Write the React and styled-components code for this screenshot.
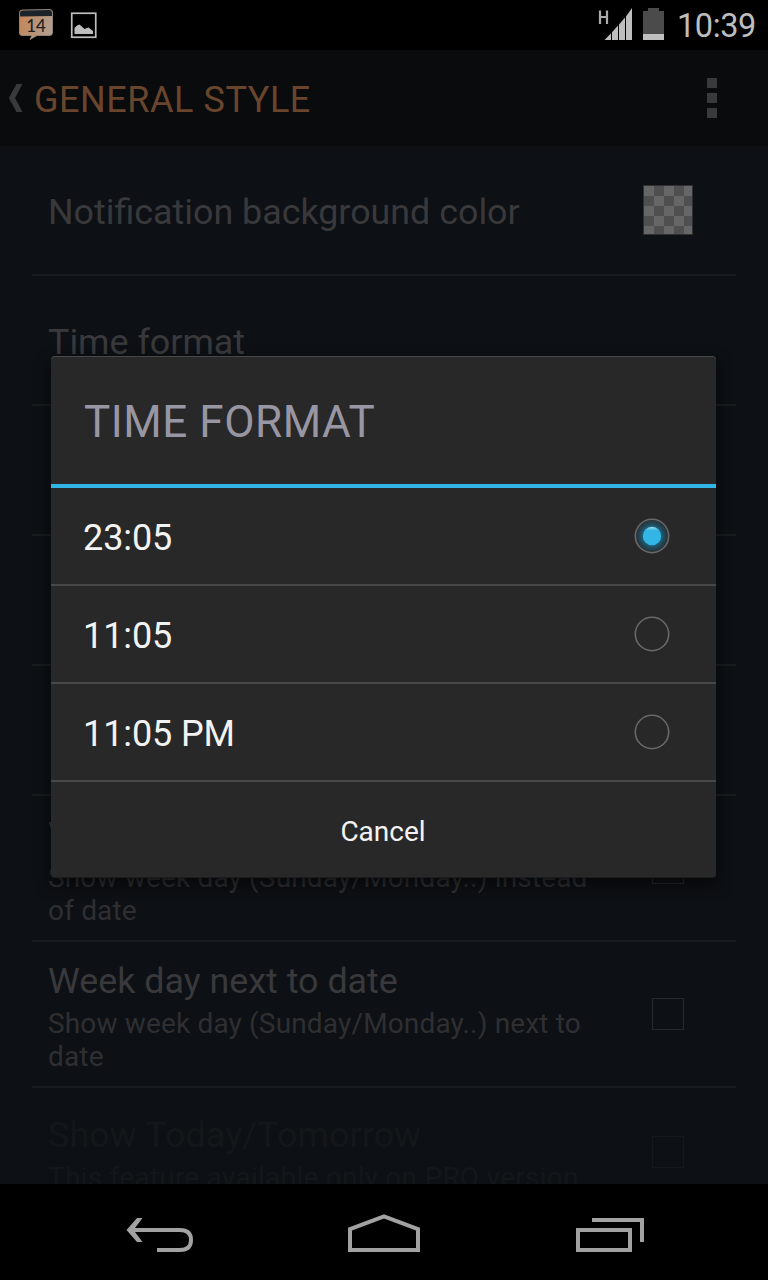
import React, { useState } from 'react';
import styled, { createGlobalStyle } from 'styled-components';

const GlobalStyle = createGlobalStyle`
  * {
    box-sizing: border-box;
  }

  body {
    margin: 0;
    background: #000;
    font-family: Roboto, "Noto Sans", sans-serif;
  }
`;

const Screen = styled.div`
  position: relative;
  display: flex;
  flex-direction: column;
  width: 768px;
  height: 1280px;
  overflow: hidden;
  background: #0d1014;
`;

const StatusBar = styled.header`
  display: flex;
  align-items: center;
  flex: 0 0 50px;
  height: 50px;
  background: #000;
`;

const NotificationIcons = styled.div`
  display: flex;
  flex: 1;
`;

const Clock = styled.div`
  width: 91px;
  padding-top: 3px;
  color: #bebebe;
  font-size: 32.5px;
  line-height: 47px;
  letter-spacing: -0.4px;
  white-space: nowrap;
`;

const ActionBar = styled.div`
  display: flex;
  align-items: center;
  flex: 0 0 96px;
  background: #0a0b0c;
`;

const ActionTitle = styled.h1`
  flex: 1;
  margin: 0;
  padding: 4px 0 0 10px;
  color: #69452d;
  font-size: 36px;
  font-weight: 400;
  line-height: 42px;
  letter-spacing: ${(props) => props.$spacing};
`;

const Overflow = styled.button`
  display: flex;
  flex-direction: column;
  align-items: center;
  gap: 5px;
  width: 112px;
  padding: 0;
  border: none;
  background: none;
`;

const OverflowDot = styled.span`
  width: 10px;
  height: 10px;
  background: #3a3a3a;
`;

const SettingsList = styled.div`
  flex: 1;
  min-height: 0;
  padding: 0 32px;
  overflow: hidden;
`;

const SettingRow = styled.div`
  display: flex;
  align-items: center;
  min-height: 130px;
  padding: 0 16px;
  border-bottom: 2px solid #191c1e;
`;

const SettingText = styled.div`
  flex: 1;
  padding: ${(props) => (props.$single ? '22px 0 18px' : props.$disabled ? '18px 0 15px' : '18px 0 13px')};
  color: ${(props) => (props.$disabled ? '#13171a' : '#39393c')};
`;

const SettingTitle = styled.div`
  font-size: 35.85px;
  line-height: 42px;
  letter-spacing: ${(props) => props.$spacing || 'normal'};
  white-space: nowrap;
`;

const SettingSummary = styled.div`
  width: 560px;
  margin-top: 5px;
  color: ${(props) => (props.$disabled ? '#13171a' : '#2f2f32')};
  font-size: 28px;
  line-height: 33px;
  letter-spacing: ${(props) => props.$spacing || '0.16px'};
`;

const ColorSwatch = styled.div`
  width: 50px;
  height: 50px;
  margin-right: 27px;
  border: 1px solid #303030;
  background: repeating-conic-gradient(#4f4f4f 0 25%, #666 0 50%) 0 0 / 20px 20px;
`;

const CheckBox = styled.div`
  width: 32px;
  height: 32px;
  margin-right: 36px;
  margin-left: -36px;
  border: 1px solid ${(props) => (props.$disabled ? '#16191b' : '#26292b')};
`;

const Dialog = styled.section`
  position: absolute;
  top: 356px;
  left: 51px;
  width: 665px;
  height: 522px;
  border-radius: 4px;
  background: #282828;
  box-shadow: inset 0 1px 0 #474747, inset 0 -1px 0 #1c1c1c, 0 6px 14px 2px rgba(0, 0, 0, 0.5);
`;

const DialogTitle = styled.h2`
  height: 132px;
  margin: 0;
  padding: 2px 33px 0;
  border-bottom: 4px solid #33b5e5;
  color: #9996a4;
  font-size: 44px;
  font-weight: 400;
  line-height: 128px;
  letter-spacing: ${(props) => props.$spacing};
`;

const Option = styled.div`
  display: flex;
  align-items: center;
  justify-content: space-between;
  height: 98px;
  padding: 0 46px 0 32px;
  border-bottom: 2px solid #484848;
  color: #f3f3f3;
  font-size: 36px;
  letter-spacing: ${(props) => props.$spacing || '-0.1px'};
  cursor: pointer;
`;

const OptionLabel = styled.span`
  padding-top: 3px;
`;

const CancelButton = styled.button`
  display: block;
  width: 100%;
  height: 96px;
  padding: 3px 1px 0 0;
  border: none;
  background: none;
  color: #f3f3f3;
  font-family: inherit;
  font-size: 28px;
  letter-spacing: 0;
`;

const NavigationBar = styled.nav`
  display: flex;
  flex: 0 0 96px;
  background: #000;
`;

const CalendarIcon = () => (
  <svg width="56" height="50" viewBox="0 0 56 50">
    <defs>
      <linearGradient id="calendar" x1="0" x2="1" y1="0" y2="0.3">
        <stop offset="0" stopColor="#c58455" />
        <stop offset="1" stopColor="#b39c8b" />
      </linearGradient>
    </defs>
    <path
      d="M22 10 L49 9.5 Q52.5 9.5 52.5 12 V32.500 Q52.500 35.500 49.500 35.500 H37 L30 39.500 L32 35.500 H22 Q19.500 35.500 19.500 33 V13 Q19.500 10 22 10Z"
      fill="url(#calendar)"
      stroke="#9a9186"
      strokeWidth="0.8"
    />
    <path d="M20 16.500 V13 Q20 10.500 23 10.500 L49 10 Q52 10 52 12.500 V16Z" fill="#1c242b" />
    <text
      x="36"
      y="32"
      textAnchor="middle"
      textLength="19.500"
      lengthAdjust="spacingAndGlyphs"
      fill="#211f1e"
      fontFamily="Lato, sans-serif"
      fontSize="17"
      fontWeight="500"
    >
      14
    </text>
  </svg>
);

const PictureIcon = () => (
  <svg width="56" height="50" viewBox="0 0 56 50">
    <rect x="15.750" y="13.250" width="24" height="24" fill="none" stroke="#bebebe" strokeWidth="1.700" />
    <path d="M18.500 34 V28 L21 25.500 L23.500 24.500 L28.500 29 L32.500 27.500 L37 31 V34Z" fill="#bebebe" />
  </svg>
);

const SignalIcon = () => (
  <svg width="45" height="50" viewBox="0 0 45 50">
    <path d="M5 10.500 V24 M12 10.500 V24 M5 17 H12" stroke="#aaa" strokeWidth="2.200" />
    <path
      d="M9.500 40 L16 33.200 V40Z M17 40 V32.200 L23 25.500 V40Z M24 40 V24.500 L30 17.500 V40Z M31 40 V16.500 L37 8 V40Z"
      fill="#bebebe"
    />
  </svg>
);

const BatteryIcon = () => (
  <svg width="37" height="50" viewBox="0 0 37 50">
    <path d="M3 11 H8 V8 H19 V11 H24 V34 H3Z" fill="#4b4b4b" />
    <rect x="3" y="34" width="21" height="6" fill="#bebebe" />
  </svg>
);

const UpIcon = () => (
  <svg width="24" height="96" viewBox="0 0 24 96">
    <path d="M16.500 34 H22.500 L15 48 L22.500 62 H16.500 L8.800 48Z" fill="#3a3a3a" />
  </svg>
);

const RadioIcon = ({ checked }) => (
  <svg width="36" height="36" viewBox="0 0 36 36">
    <defs>
      <radialGradient id="glow">
        <stop offset="0.5" stopColor="#1d6a85" />
        <stop offset="0.72" stopColor="#21495a" />
        <stop offset="1" stopColor="#292e30" />
      </radialGradient>
      <linearGradient id="dot" x1="0" x2="0" y1="0" y2="1">
        <stop offset="0" stopColor="#a4dcf2" />
        <stop offset="0.2" stopColor="#33b5e5" />
        <stop offset="1" stopColor="#33b5e5" />
      </linearGradient>
    </defs>
    <circle cx="18" cy="18" r="16.700" fill={checked ? 'url(#glow)' : 'none'} stroke="#686868" strokeWidth="1.600" />
    {checked && <circle cx="18" cy="18" r="9.200" fill="url(#dot)" />}
  </svg>
);

const NavigationIcons = () => (
  <svg width="768" height="96" viewBox="0 0 768 96" fill="none" stroke="#a2a2a2" strokeWidth="4">
    <path d="M157 66 H180 Q191 66 191 56 Q191 46 180 46 H130" />
    <path d="M137 34 H142.500 L133.500 46 L142.500 58 H137 L126.500 46Z" fill="#a2a2a2" stroke="none" />
    <path d="M350 66 V45.200 L384 32.500 L418 45.200 V66Z" />
    <path d="M592 36 H642 V58" />
    <rect x="578" y="46" width="52" height="20" />
  </svg>
);

const options = ['23:05', '11:05', '11:05 PM'];

const App = () => {
  const [selected, setSelected] = useState('23:05');

  return (
    <Screen>
      <GlobalStyle />
      <StatusBar>
        <NotificationIcons>
          <CalendarIcon />
          <PictureIcon />
        </NotificationIcons>
        <SignalIcon />
        <BatteryIcon />
        <Clock>10:39</Clock>
      </StatusBar>

      <ActionBar>
        <UpIcon />
        <ActionTitle $spacing="0.55px">GENERAL STYLE</ActionTitle>
        <Overflow aria-label="More options">
          <OverflowDot />
          <OverflowDot />
          <OverflowDot />
        </Overflow>
      </ActionBar>

      <SettingsList>
        <SettingRow>
          <SettingText $single>
            <SettingTitle>Notification background color</SettingTitle>
          </SettingText>
          <ColorSwatch />
        </SettingRow>
        <SettingRow>
          <SettingText $single>
            <SettingTitle>Time format</SettingTitle>
          </SettingText>
        </SettingRow>
        <SettingRow />
        <SettingRow />
        <SettingRow />
        <SettingRow>
          <SettingText>
            <SettingTitle>Week day</SettingTitle>
            <SettingSummary>Show week day (Sunday/Monday..) instead of date</SettingSummary>
          </SettingText>
          <CheckBox />
        </SettingRow>
        <SettingRow>
          <SettingText>
            <SettingTitle>Week day next to date</SettingTitle>
            <SettingSummary>Show week day (Sunday/Monday..) next to date</SettingSummary>
          </SettingText>
          <CheckBox />
        </SettingRow>
        <SettingRow>
          <SettingText $disabled>
            <SettingTitle $spacing="0.12px">Show Today/Tomorrow</SettingTitle>
            <SettingSummary $disabled $spacing="0.24px">
              This feature available only on PRO version
            </SettingSummary>
          </SettingText>
          <CheckBox $disabled />
        </SettingRow>
      </SettingsList>

      <NavigationBar>
        <NavigationIcons />
      </NavigationBar>

      <Dialog role="dialog">
        <DialogTitle $spacing="0.55px">TIME FORMAT</DialogTitle>
        {options.map((option) => (
          <Option key={option} onClick={() => setSelected(option)}>
            <OptionLabel>{option}</OptionLabel>
            <RadioIcon checked={option === selected} />
          </Option>
        ))}
        <CancelButton>Cancel</CancelButton>
      </Dialog>
    </Screen>
  );
};

export default App;
